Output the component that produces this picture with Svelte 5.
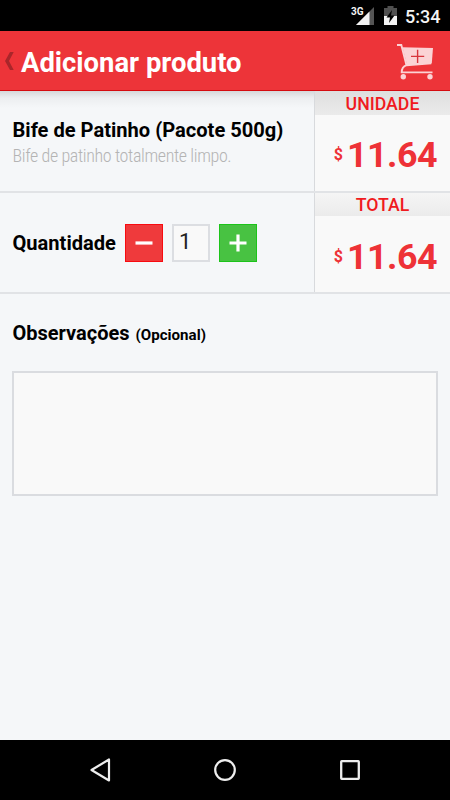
<script lang="ts">
	const unitPrice = 11.64;

	let quantity = $state(1);
	let notes = $state('');
	let total = $derived((unitPrice * quantity).toFixed(2));

	const decrease = () => {
		if (quantity > 1) quantity -= 1;
	};

	const increase = () => {
		quantity += 1;
	};
</script>

<div class="screen">
	<div class="status-bar">
		<span class="network">3G</span>
		<svg class="signal" width="18" height="18" viewBox="0 0 18 18">
			<path d="M18 0V18H0Z" fill="#555" />
			<path d="M13.5 4.5V18H0Z" fill="#f2f2f2" />
		</svg>
		<svg class="battery" width="13" height="19" viewBox="0 0 13 19">
			<path d="M3.5 0H9.5V2H13V10H0V2H3.5Z" fill="#505050" />
			<path d="M0 10H13V19H0Z" fill="#f4f4f4" />
			<path d="M8 4L2.5 11.5H6L5 17L10.5 9.5H7Z" fill="#000" />
		</svg>
		<span class="clock">5:34</span>
	</div>

	<header>
		<button class="back" aria-label="Voltar">
			<svg width="9" height="18" viewBox="0 0 9 18">
				<path d="M5 0H8.7L4 9L8.7 18H5L0 9Z" fill="#a9262a" />
			</svg>
		</button>
		<h1>Adicionar produto</h1>
		<button class="cart" aria-label="Carrinho">
			<svg width="37" height="36" viewBox="0 0 37 36">
				<path d="M5.5 3.3L36 4L34.8 19.3L10 21Z" fill="#fbd3d5" />
				<path
					d="M0 1H4.3L9.5 21.2C6 22.5 4.7 25 4.7 28.4H35.5M9.5 21.2L34.3 19.2"
					fill="none"
					stroke="#fbd3d5"
					stroke-width="1.9"
				/>
				<circle cx="6.3" cy="32.8" r="2.7" fill="#fbd3d5" />
				<circle cx="33" cy="32.8" r="2.7" fill="#fbd3d5" />
				<path d="M14 12.4H27.2M20.6 5.8V19" stroke="#d8353c" stroke-width="1.4" />
			</svg>
		</button>
	</header>

	<main>
		<section class="row first">
			<div class="info product">
				<h2>Bife de Patinho (Pacote 500g)</h2>
				<p class="description">Bife de patinho totalmente limpo.</p>
			</div>
			<div class="price">
				<h3>UNIDADE</h3>
				<p><small>$</small><strong>{unitPrice.toFixed(2)}</strong></p>
			</div>
		</section>

		<section class="row second">
			<div class="info quantity">
				<label for="quantity">Quantidade</label>
				<button class="step minus" onclick={decrease} aria-label="Diminuir">
					<svg width="18" height="18" viewBox="0 0 18 18">
						<path d="M0.5 9H17.5" stroke="#fff" stroke-width="3.2" />
					</svg>
				</button>
				<input id="quantity" type="text" bind:value={quantity} />
				<button class="step plus" onclick={increase} aria-label="Aumentar">
					<svg width="18" height="18" viewBox="0 0 18 18">
						<path d="M0.5 9H17.5M9 0.5V17.5" stroke="#fff" stroke-width="3.2" />
					</svg>
				</button>
			</div>
			<div class="price">
				<h3>TOTAL</h3>
				<p><small>$</small><strong>{total}</strong></p>
			</div>
		</section>

		<section class="notes">
			<label for="notes">Observações <small>(Opcional)</small></label>
			<textarea id="notes" bind:value={notes}></textarea>
		</section>
	</main>

	<nav>
		<svg width="24" height="26" viewBox="0 0 24 26">
			<path d="M21 2.5V23.5L3.5 13Z" fill="none" stroke="#eee" stroke-width="2.2" stroke-linejoin="round" />
		</svg>
		<svg width="24" height="24" viewBox="0 0 24 24">
			<circle cx="12" cy="12" r="9.8" fill="none" stroke="#eee" stroke-width="2.2" />
		</svg>
		<svg width="24" height="24" viewBox="0 0 24 24">
			<rect x="3.2" y="3.2" width="17.6" height="17.6" rx="0.5" fill="none" stroke="#eee" stroke-width="2.3" />
		</svg>
	</nav>
</div>

<style>
	:global(body) {
		margin: 0;
	}

	.screen {
		display: flex;
		flex-direction: column;
		height: 800px;
		background: #f5f7f9;
		color: #000;
		font-family: Roboto, 'Liberation Sans', sans-serif;

		& * {
			box-sizing: border-box;
		}

		& h1,
		& h2,
		& h3,
		& p {
			margin: 0;
			white-space: nowrap;
		}

		& button {
			padding: 0;
			border: 0;
			background: none;
			cursor: pointer;
		}

		& svg {
			display: block;
		}
	}

	.status-bar {
		display: flex;
		height: 31px;
		padding: 7px 10px 0 351px;
		background: #000;
		color: #f4f4f4;

		& .network {
			width: 5px;
			font-size: 10px;
			font-weight: 700;
			font-stretch: 90%;
			line-height: 10px;
		}

		& .signal {
			flex: none;
		}

		& .battery {
			flex: none;
			margin: -1px 0 0 10px;
		}

		& .clock {
			margin-left: 8px;
			font-size: 18px;
			font-weight: 500;
			line-height: 19px;
		}
	}

	header {
		display: flex;
		align-items: center;
		height: 60px;
		padding: 3px 16px 0 5px;
		border-bottom: 1px solid #d50b10;
		background: #ed3439;
		color: #fff;

		& .back {
			margin-top: -3px;
		}

		& h1 {
			padding: 2px 0 0 7px;
			font-size: 27.4px;
			font-weight: 700;
			line-height: 32px;
		}

		& .cart {
			margin: -1px 0 0 auto;
		}
	}

	main {
		flex: 1;
		background: linear-gradient(#d6d8da, #eceef0 7px, #f5f7f9 17px);
	}

	.row {
		display: flex;
		height: 101px;
		border-bottom: 2px solid #e1e3e6;

		& .info {
			width: 314px;
			padding-left: 12.5px;
		}

		& .product {
			padding-top: 27px;
		}

		& h2 {
			font-size: 20.1px;
			font-weight: 700;
			line-height: 24px;
		}

		& .description {
			color: #b4b4b4;
			font-size: 18px;
			font-weight: 300;
			font-stretch: 75%;
			letter-spacing: -0.38px;
			line-height: 27px;
		}
	}

	.first {
		height: 102px;
	}

	.price {
		flex: 1;
		border-left: 1px solid #d8dadd;
		background: #f9f9f9;
		color: #ee3237;

		& h3 {
			height: 24px;
			background: linear-gradient(#dedede, #ebebeb);
			color: #f01a20;
			font-size: 17.7px;
			font-weight: 500;
			line-height: 26px;
			text-align: center;
		}

		& p {
			display: flex;
			justify-content: flex-end;
			align-items: center;
			padding: 18px 13px 0 0;
			line-height: 44px;
		}

		& small {
			margin: -1px 4px 0 0;
			font-size: 16px;
			font-weight: 700;
		}

		& strong {
			font-size: 35.8px;
			font-weight: 700;
			letter-spacing: -0.5px;
		}
	}

	.second .price h3 {
		height: 23px;
		margin-bottom: 1px;
		background: linear-gradient(#f5f5f5, #ebebeb);
		line-height: 24px;
	}

	.quantity {
		display: flex;
		align-items: center;

		& label {
			width: 112.5px;
			font-size: 20.1px;
			font-weight: 700;
		}

		& .step {
			display: flex;
			justify-content: center;
			align-items: center;
			width: 38px;
			height: 38px;
		}

		& .minus {
			border: 1px solid #f80b10;
			background: #ef3a3c;
		}

		& .plus {
			border: 1px solid #1cc41a;
			background: #48c242;
		}

		& input {
			width: 38px;
			height: 38px;
			margin: 0 9px;
			padding: 0 0 3px 5px;
			border: 2px solid #dcdee2;
			background: #f9f9f9;
			color: #222;
			font: 400 22px Roboto, sans-serif;
			outline: none;
		}
	}

	.notes {
		padding: 27px 12px 0;

		& label {
			display: block;
			padding-left: 0.5px;
			font-size: 20px;
			font-weight: 700;
			line-height: 24px;
		}

		& small {
			margin-left: 1px;
			font-size: 15.1px;
		}

		& textarea {
			display: block;
			width: 426px;
			height: 125px;
			margin-top: 24px;
			border: 2px solid #dadce0;
			background: #f9f9f9;
			outline: none;
			resize: none;
		}
	}

	nav {
		display: flex;
		justify-content: space-between;
		align-items: center;
		height: 60px;
		padding: 0 88px;
		background: #000;
	}
</style>
